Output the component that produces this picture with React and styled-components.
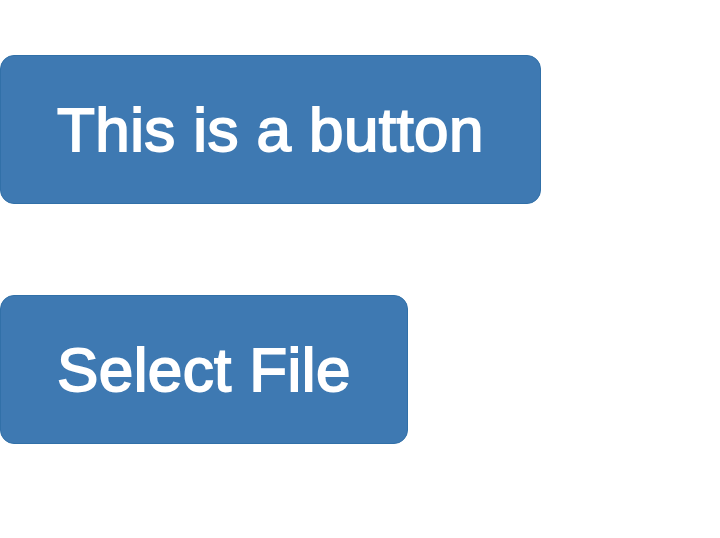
import React from 'react';
import styled, { createGlobalStyle } from 'styled-components';

const GlobalStyle = createGlobalStyle`
  html, body {
    margin: 0;
    padding: 0;
    background: #ffffff;
  }
`;

const Page = styled.div`
  display: flex;
  flex-direction: column;
  align-items: flex-start;
  gap: 91px;
  padding-top: 55px;
`;

const Button = styled.button`
  display: inline-block;
  margin: 0;
  padding: 30px 56px;
  border: 1px solid #3170a8;
  border-radius: 14px;
  background: #3e79b2;
  color: #ffffff;
  font-family: 'Liberation Sans', Arial, sans-serif;
  font-weight: 400;
  font-size: 62px;
  line-height: 87px;
  letter-spacing: 0.4px;
  -webkit-text-stroke: 1.8px #ffffff;
  white-space: nowrap;
  cursor: pointer;
`;

export default function App() {
  return (
    <>
      <GlobalStyle />
      <Page>
        <Button type="button">This is a button</Button>
        <Button type="button">Select File</Button>
      </Page>
    </>
  );
}
